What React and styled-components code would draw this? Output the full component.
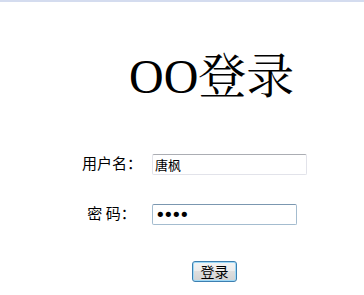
import React from "react";
import styled, { createGlobalStyle } from "styled-components";

const GlobalStyle = createGlobalStyle`
  html, body {
    margin: 0;
    padding: 0;
    background: #ffffff;
  }
  body {
    font-family: "Noto Sans CJK SC", "Liberation Sans", sans-serif;
    color: #000;
  }
`;

const Page = styled.div`
  width: 364px;
  min-height: 295px;
  display: flex;
  flex-direction: column;
`;

const TopBar = styled.div`
  height: 2px;
  background: #d4dcef;
`;

const Title = styled.h1`
  margin: 0;
  padding: 47px 0 0 129px;
  font-family: "Liberation Serif", "Noto Serif CJK SC", "Noto Sans CJK SC", serif;
  font-weight: normal;
  font-size: 48px;
  line-height: 56px;
  white-space: nowrap;
`;

const Form = styled.form`
  display: flex;
  flex-direction: column;
  margin: 49px 0 0 0;
`;

const Row = styled.div`
  display: flex;
  align-items: center;
  gap: 11px;
  padding-left: 82px;
  margin-bottom: ${(p) => p.$after}px;
`;

const Label = styled.label`
  width: 59px;
  text-align: center;
  font-size: 15px;
  line-height: 21px;
  white-space: nowrap;
  margin-top: -4px;
`;

const TextInput = styled.input`
  box-sizing: border-box;
  width: ${(p) => p.$w}px;
  height: 21px;
  margin: 0;
  padding: 0 2px;
  font-family: "Noto Sans CJK SC", "Liberation Sans", sans-serif;
  font-size: 13px;
  color: #000;
  background: #fff;
  border: 1px solid #e2e3ea;
  border-top-color: #abadb3;
  border-radius: 2px;
  outline: none;
`;

const PasswordInput = styled(TextInput)`
  font-family: "DejaVu Sans", sans-serif;
  font-size: 18px;
  letter-spacing: -2.6px;
  border: 1px solid #a4bccf;
  border-top-color: #7b97b0;
`;

const ButtonRow = styled.div`
  display: flex;
  padding-left: 192px;
`;

const Button = styled.button`
  box-sizing: border-box;
  width: 45px;
  height: 21px;
  padding: 0;
  margin: 0;
  font-family: "Noto Sans CJK SC", sans-serif;
  font-size: 14px;
  line-height: 19px;
  color: #000;
  border: 1px solid #3c7fb1;
  border-radius: 3px;
  background: linear-gradient(#f4f4f4 0%, #ececec 50%, #dedede 50%, #d2d2d2 100%);
  box-shadow: inset 0 0 0 1px #9fd9f6;
  cursor: pointer;
`;

export default function App() {
  return (
    <Page>
      <GlobalStyle />
      <TopBar />
      <Title>OO登录</Title>
      <Form onSubmit={(e) => e.preventDefault()}>
        <Row $after={29}>
          <Label htmlFor="user">用户名：</Label>
          <TextInput id="user" type="text" $w={155} defaultValue="唐枫" />
        </Row>
        <Row $after={36}>
          <Label htmlFor="pwd">密 码：</Label>
          <PasswordInput id="pwd" type="password" $w={145} defaultValue="1234" />
        </Row>
        <ButtonRow>
          <Button type="submit">登录</Button>
        </ButtonRow>
      </Form>
    </Page>
  );
}
